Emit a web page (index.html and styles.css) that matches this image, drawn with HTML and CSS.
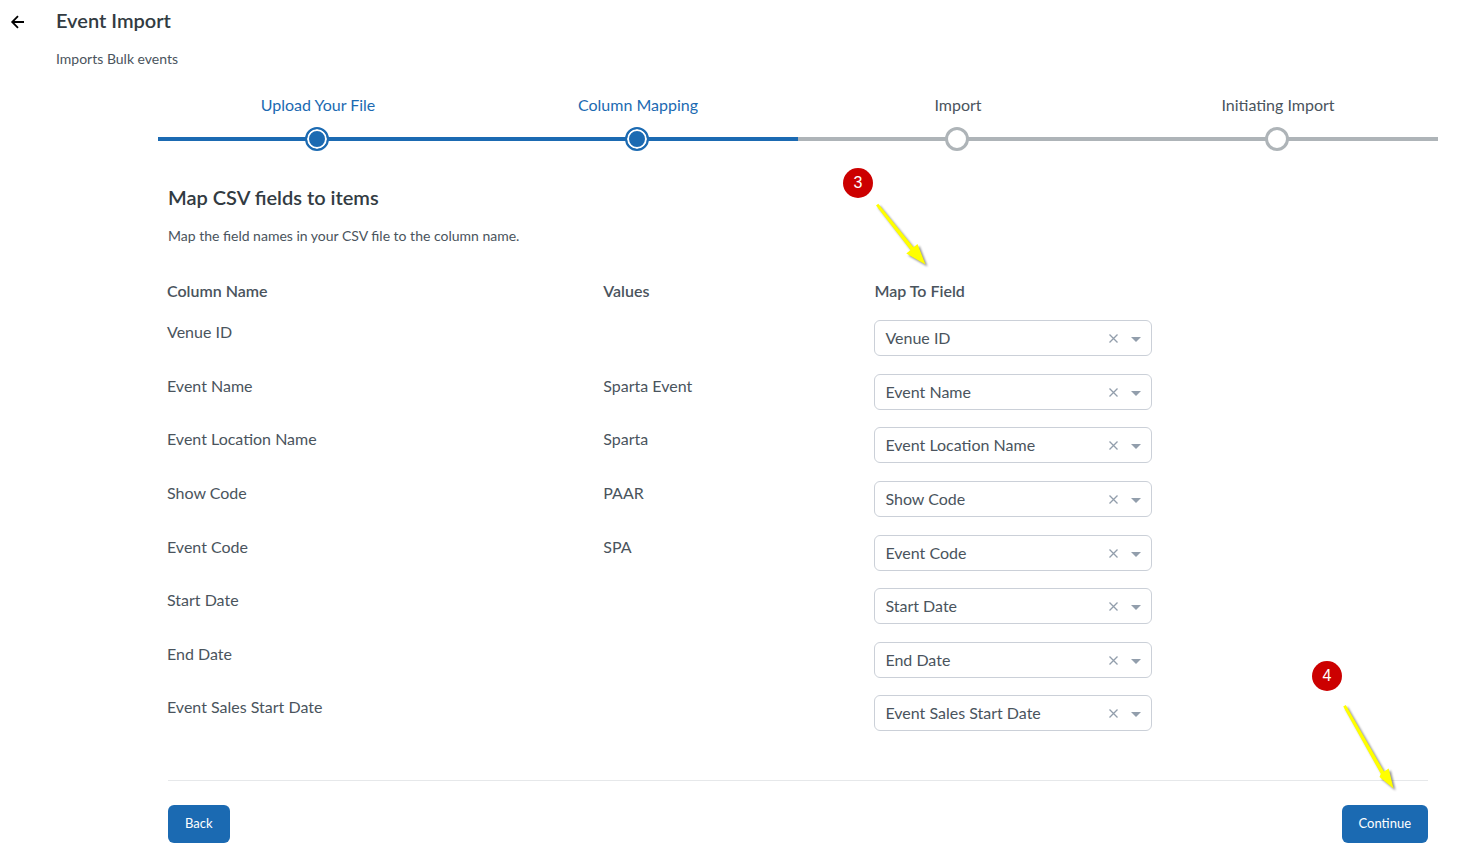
FILE: index.html
```
<!DOCTYPE html>
<html lang="en">
<head>
<meta charset="utf-8">
<title>Event Import</title>
<meta name="viewport" content="width=device-width, initial-scale=1">
<link rel="stylesheet" href="styles.css">
</head>
<body>
<header class="page-header">
  <button class="back-link" type="button" aria-label="Go back">
    <svg width="14" height="14" viewBox="0 0 14 14" fill="none" stroke="currentColor" stroke-width="1.800"><path d="M14 7H2M8 1.200L2.200 7l5.800 5.800"/></svg>
  </button>
  <div>
    <h1 class="title">Event Import</h1>
    <p class="note">Imports Bulk events</p>
  </div>
</header>
<main class="wizard">
  <ol class="steps">
    <li class="step done">Upload Your File<span class="dot"></span></li>
    <li class="step done">Column Mapping<span class="dot"></span></li>
    <li class="step">Import<span class="dot"></span></li>
    <li class="step">Initiating Import<span class="dot"></span></li>
  </ol>
  <section class="panel">
    <h2 class="title">Map CSV fields to items</h2>
    <p class="note">Map the field names in your CSV file to the column name.</p>
    <div class="mapping-area">
    <table class="mapping">
      <thead>
        <tr><th class="col-name">Column Name</th><th class="col-value">Values</th><th>Map To Field</th></tr>
      </thead>
    </table>
    <table class="mapping mapping-rows">
      <tbody>
        <tr><td class="col-name">Venue ID</td><td class="col-value"></td><td><div class="picker"><select aria-label="Field for Venue ID"><option>Venue ID</option></select><button class="clear" type="button" aria-label="Clear"><svg width="9" height="9" viewBox="0 0 9 9"><path d="M.5.5l8 8M8.500.5l-8 8"/></svg></button><span class="caret"></span></div></td></tr>
        <tr><td>Event Name</td><td>Sparta Event</td><td><div class="picker"><select aria-label="Field for Event Name"><option>Event Name</option></select><button class="clear" type="button" aria-label="Clear"><svg width="9" height="9" viewBox="0 0 9 9"><path d="M.5.5l8 8M8.500.5l-8 8"/></svg></button><span class="caret"></span></div></td></tr>
        <tr><td>Event Location Name</td><td>Sparta</td><td><div class="picker"><select aria-label="Field for Event Location Name"><option>Event Location Name</option></select><button class="clear" type="button" aria-label="Clear"><svg width="9" height="9" viewBox="0 0 9 9"><path d="M.5.5l8 8M8.500.5l-8 8"/></svg></button><span class="caret"></span></div></td></tr>
        <tr><td>Show Code</td><td>PAAR</td><td><div class="picker"><select aria-label="Field for Show Code"><option>Show Code</option></select><button class="clear" type="button" aria-label="Clear"><svg width="9" height="9" viewBox="0 0 9 9"><path d="M.5.5l8 8M8.500.5l-8 8"/></svg></button><span class="caret"></span></div></td></tr>
        <tr><td>Event Code</td><td>SPA</td><td><div class="picker"><select aria-label="Field for Event Code"><option>Event Code</option></select><button class="clear" type="button" aria-label="Clear"><svg width="9" height="9" viewBox="0 0 9 9"><path d="M.5.5l8 8M8.500.5l-8 8"/></svg></button><span class="caret"></span></div></td></tr>
        <tr><td>Start Date</td><td></td><td><div class="picker"><select aria-label="Field for Start Date"><option>Start Date</option></select><button class="clear" type="button" aria-label="Clear"><svg width="9" height="9" viewBox="0 0 9 9"><path d="M.5.5l8 8M8.500.5l-8 8"/></svg></button><span class="caret"></span></div></td></tr>
        <tr><td>End Date</td><td></td><td><div class="picker"><select aria-label="Field for End Date"><option>End Date</option></select><button class="clear" type="button" aria-label="Clear"><svg width="9" height="9" viewBox="0 0 9 9"><path d="M.5.5l8 8M8.500.5l-8 8"/></svg></button><span class="caret"></span></div></td></tr>
        <tr><td>Event Sales Start Date</td><td></td><td><div class="picker"><select aria-label="Field for Event Sales Start Date"><option>Event Sales Start Date</option></select><button class="clear" type="button" aria-label="Clear"><svg width="9" height="9" viewBox="0 0 9 9"><path d="M.5.5l8 8M8.500.5l-8 8"/></svg></button><span class="caret"></span></div></td></tr>
      </tbody>
    </table>
    </div>
    <footer class="actions">
      <button class="btn" type="button">Back</button>
      <button class="btn" type="button">Continue</button>
    </footer>
  </section>
</main>
<span class="marker marker-three">3</span>
<svg class="arrow arrow-three" width="60" height="70" viewBox="0 0 60 70"><path d="M6 5.500L8.300 3.700 43.500 47.200 47.500 44 55.500 64.500 36.300 53.500 40.500 50z"/></svg>
<span class="marker marker-four">4</span>
<svg class="arrow arrow-four" width="60" height="92" viewBox="0 0 60 92"><path d="M3.200 5.500L5.800 4 44 70.500 48.700 67.500 53.500 87.500 39.500 76 40.800 72.800z"/></svg>
</body>
</html>
```
FILE: styles.css
```
* { box-sizing: border-box; }
body {
  position: relative;
  margin: 0;
  background: #fff;
  color: #4a545d;
  font: 16px/20px Lato, "Open Sans", sans-serif;
}
h1, h2, p, ol { margin: 0; padding: 0; }
button, select { font: inherit; }
.page-header {
  display: flex;
  gap: 32px;
  padding: 8px 10px 0;
}
.back-link {
  display: flex;
  align-items: center;
  width: 14px;
  height: 28px;
  padding: 0;
  border: 0;
  background: none;
  color: #000;
}
.title {
  color: #323b42;
  font-size: 20px;
  font-weight: 600;
  line-height: 24px;
}
.note {
  margin-top: 17px;
  font-size: 14px;
}
.wizard { padding: 26px 35px 0 158px; }
.steps {
  display: grid;
  grid-template-columns: repeat(4, 1fr);
  list-style: none;
}
.step {
  display: flex;
  flex-direction: column;
  align-items: center;
  gap: 12px;
  background: linear-gradient(#aeb4b8, #aeb4b8) 0 42px / 100% 4px no-repeat;
}
.step.done {
  background-image: linear-gradient(#1b6ab2, #1b6ab2);
  color: #1b6ab2;
}
.dot {
  width: 24px;
  height: 24px;
  margin-right: 2px;
  border: 3px solid #aeb4b8;
  border-radius: 50%;
  background: #fff;
}
.done .dot {
  border: 2px solid #1b6ab2;
  background: #1b6ab2;
  box-shadow: inset 0 0 0 2px #fff;
}
.panel { padding: 34px 10px 0; }
.mapping-area { margin: 35px 0 0 -1px; }
.mapping {
  width: 100%;
  border-collapse: collapse;
  table-layout: fixed;
}
.mapping-rows {
  height: 429px;
  margin-top: 19px;
}
.mapping th {
  padding: 0;
  font-weight: 600;
  text-align: left;
}
.mapping td {
  height: 36px;
  padding: 0;
  vertical-align: top;
}
.mapping-rows td:not(:last-child) { padding-top: 2px; }
.col-name { width: 34.6%; }
.col-value { width: 21.5%; }
.picker {
  position: relative;
  width: 278px;
}
.picker select {
  display: block;
  width: 100%;
  height: 36px;
  padding: 0 48px 0 10px;
  border: 1px solid #cbd0d8;
  border-radius: 6px;
  appearance: none;
  background: #fff;
  color: inherit;
}
.clear {
  position: absolute;
  top: 14px;
  right: 34px;
  display: flex;
  padding: 0;
  border: 0;
  background: none;
}
.clear svg {
  fill: none;
  stroke: #929eac;
  stroke-width: 1.3;
}
.caret {
  position: absolute;
  top: 17px;
  right: 11px;
  border: 5px solid transparent;
  border-top-color: #929eac;
  border-bottom: 0;
  pointer-events: none;
}
.actions {
  display: flex;
  justify-content: space-between;
  margin-top: 31px;
  padding-top: 24px;
  border-top: 1px solid #e6e8ea;
}
.btn {
  height: 38px;
  padding: 0 17px 2px;
  border: 0;
  border-radius: 6px;
  background: #1b6ab2;
  color: #fff;
  font-size: 13px;
}
.marker {
  position: absolute;
  width: 30px;
  height: 30px;
  border-radius: 50%;
  background: #c00;
  color: #fff;
  font: 16px/30px "Liberation Sans", Arial, sans-serif;
  text-align: center;
}
.arrow {
  position: absolute;
  fill: #ff0;
  filter: drop-shadow(2px 2px 1px rgba(0, 0, 0, .45));
  pointer-events: none;
}
.marker-three { left: 843px; top: 168px; }
.arrow-three { left: 870px; top: 200px; }
.marker-four { left: 1312px; top: 661px; }
.arrow-four { left: 1340px; top: 701px; }
```
